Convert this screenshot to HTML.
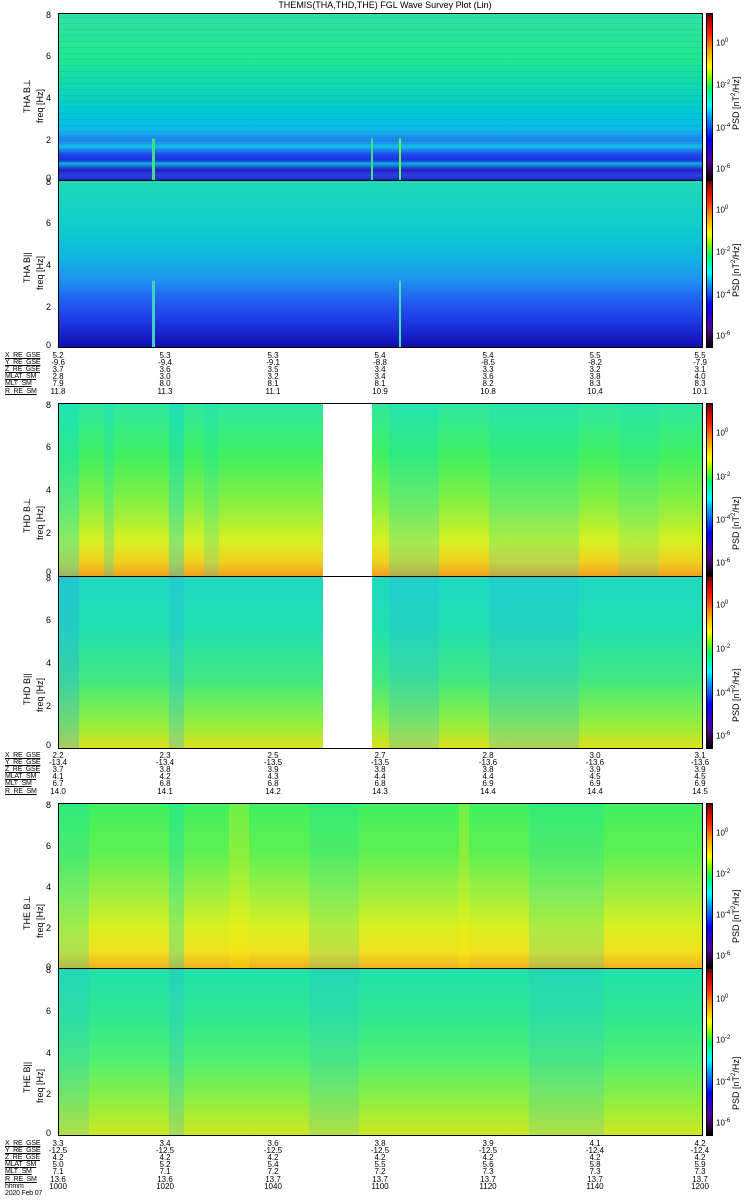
<!DOCTYPE html>
<html><head><meta charset="utf-8"><style>
*{margin:0;padding:0;box-sizing:border-box}
body{width:750px;height:1200px;background:#fff;position:relative;overflow:hidden;font-family:"Liberation Sans",sans-serif;color:#000}
.p{position:absolute;left:58px;width:645px;border:1.5px solid #000}
.s{position:absolute;inset:0}
.cb{position:absolute;left:706px;width:7px;border:1px solid #000;background:linear-gradient(to top,#000 0%,#300040 5%,#5000a0 12%,#0000ff 25%,#00a0ff 38%,#00ffff 45%,#00ff60 55%,#80ff00 62%,#ffff00 68%,#ffa000 78%,#ff2000 88%,#c00000 96%,#600000 100%)}
.ct{position:absolute;left:716px;font-size:8px}
.ct sup{font-size:6px}
.ax{position:absolute;font-size:9px;transform:rotate(-90deg);transform-origin:left top;white-space:nowrap}
.yl{position:absolute;left:46px;font-size:9px}
.r{position:absolute;left:0;width:750px;height:7px;font-size:8px;line-height:7px;white-space:nowrap}
.r span{position:absolute;transform:translateX(-50%)}
.r b{position:absolute;left:5px;font-weight:normal;text-decoration:underline;font-size:7px;letter-spacing:-0.2px}
.a{left:58px}.b{left:165px}.c{left:273px}.d{left:380px}.e{left:488px}.f{left:595px}.g{left:700px}
</style></head><body>
<div style="position:absolute;top:0;left:0;width:750px;text-align:center;font-size:9px;line-height:11px;padding-left:20px">THEMIS(THA,THD,THE) FGL Wave Survey Plot (Lin)</div>

<!-- Panel 1 THA Bperp -->
<div class="p" style="top:13px;height:168px;background:linear-gradient(to bottom,#30e0a0 0%,#20e890 25%,#10d8b0 45%,#00c8d8 60%,#10b8e8 70%,#2080f0 76%,#10c0e0 80%,#2050f0 84%,#1a30e0 88%,#10b0e0 90%,#2020c8 94%,#3040e0 97%,#1828c0 100%)">
<div class="s" style="background:repeating-linear-gradient(to bottom,transparent 0 3px,rgba(0,0,150,.06) 3px 4px,transparent 4px 6px)"></div>
<div class="s" style="background:linear-gradient(to right,transparent 93px,#40e080 93px 96px,transparent 96px 312px,#40e080 312px 314px,transparent 314px 340px,#60f060 340px 342px,transparent 342px);clip-path:inset(75% 0 0 0)"></div>
</div>
<div class="cb" style="top:13px;height:168px"></div>
<div class="ct" style="top:38px">10<sup>0</sup></div><div class="ct" style="top:80px">10<sup>-2</sup></div><div class="ct" style="top:123px">10<sup>-4</sup></div><div class="ct" style="top:164px">10<sup>-6</sup></div>
<div class="ax" style="left:731px;top:130px">PSD [nT<sup style="font-size:6px">2</sup>/Hz]</div>
<div class="ax" style="left:22px;top:113px">THA B⊥</div><div class="ax" style="left:35px;top:123px">freq [Hz]</div>
<div class="yl" style="top:10px">8</div><div class="yl" style="top:51px">6</div><div class="yl" style="top:93px">4</div><div class="yl" style="top:135px">2</div><div class="yl" style="top:173px">0</div>

<!-- Panel 2 THA Bpar -->
<div class="p" style="top:180px;height:168px;background:linear-gradient(to bottom,#20d8b8 0%,#10d0c8 25%,#10b8e0 45%,#2090f0 60%,#2060f0 72%,#2040e8 82%,#1828d0 90%,#1010b0 100%)">
<div class="s" style="background:linear-gradient(to right,transparent 93px,#40d0c0 93px 96px,transparent 96px 340px,#40e0b0 340px 342px,transparent 342px);clip-path:inset(60% 0 0 0)"></div>
</div>
<div class="cb" style="top:180px;height:168px"></div>
<div class="ct" style="top:205px">10<sup>0</sup></div><div class="ct" style="top:247px">10<sup>-2</sup></div><div class="ct" style="top:290px">10<sup>-4</sup></div><div class="ct" style="top:331px">10<sup>-6</sup></div>
<div class="ax" style="left:731px;top:297px">PSD [nT<sup style="font-size:6px">2</sup>/Hz]</div>
<div class="ax" style="left:22px;top:283px">THA B||</div><div class="ax" style="left:35px;top:290px">freq [Hz]</div>
<div class="yl" style="top:177px">8</div><div class="yl" style="top:218px">6</div><div class="yl" style="top:260px">4</div><div class="yl" style="top:302px">2</div><div class="yl" style="top:340px">0</div>

<div class="r" style="top:352px"><b>X_RE_GSE</b><span class="a">5.2</span><span class="b">5.3</span><span class="c">5.3</span><span class="d">5.4</span><span class="e">5.4</span><span class="f">5.5</span><span class="g">5.5</span></div>
<div class="r" style="top:359px"><b>Y_RE_GSE</b><span class="a">-9.6</span><span class="b">-9.4</span><span class="c">-9.1</span><span class="d">-8.8</span><span class="e">-8.5</span><span class="f">-8.2</span><span class="g">-7.9</span></div>
<div class="r" style="top:366px"><b>Z_RE_GSE</b><span class="a">3.7</span><span class="b">3.6</span><span class="c">3.5</span><span class="d">3.4</span><span class="e">3.3</span><span class="f">3.2</span><span class="g">3.1</span></div>
<div class="r" style="top:373px"><b>MLAT_SM</b><span class="a">2.8</span><span class="b">3.0</span><span class="c">3.2</span><span class="d">3.4</span><span class="e">3.6</span><span class="f">3.8</span><span class="g">4.0</span></div>
<div class="r" style="top:380px"><b>MLT_SM</b><span class="a">7.9</span><span class="b">8.0</span><span class="c">8.1</span><span class="d">8.1</span><span class="e">8.2</span><span class="f">8.3</span><span class="g">8.3</span></div>
<div class="r" style="top:388px"><b>R_RE_SM</b><span class="a">11.8</span><span class="b">11.3</span><span class="c">11.1</span><span class="d">10.9</span><span class="e">10.8</span><span class="f">10.4</span><span class="g">10.1</span></div>

<!-- Panel 3 THD Bperp -->
<div class="p" style="top:403px;height:174px;background:linear-gradient(to bottom,#30e8a0 0%,#40f060 30%,#90f040 60%,#d8f020 80%,#f0d020 92%,#f0a020 100%)">
<div class="s" style="background:linear-gradient(to right,rgba(0,220,220,.35) 0 20px,transparent 20px 45px,rgba(0,220,220,.25) 45px 55px,transparent 55px 110px,rgba(0,210,230,.35) 110px 125px,transparent 125px 145px,rgba(0,220,220,.2) 145px 160px,transparent 160px 330px,rgba(0,220,220,.25) 330px 380px,transparent 380px 430px,rgba(0,220,220,.2) 430px 520px,transparent 520px 560px,rgba(0,220,220,.15) 560px 600px,transparent 600px)"></div>
<div class="s" style="left:264px;width:49px;background:#fff"></div>
</div>
<div class="cb" style="top:403px;height:174px"></div>
<div class="ct" style="top:428px">10<sup>0</sup></div><div class="ct" style="top:472px">10<sup>-2</sup></div><div class="ct" style="top:515px">10<sup>-4</sup></div><div class="ct" style="top:558px">10<sup>-6</sup></div>
<div class="ax" style="left:731px;top:550px">PSD [nT<sup style="font-size:6px">2</sup>/Hz]</div>
<div class="ax" style="left:22px;top:533px">THD B⊥</div><div class="ax" style="left:35px;top:540px">freq [Hz]</div>
<div class="yl" style="top:400px">8</div><div class="yl" style="top:442px">6</div><div class="yl" style="top:485px">4</div><div class="yl" style="top:528px">2</div><div class="yl" style="top:567px">0</div>

<!-- Panel 4 THD Bpar -->
<div class="p" style="top:576px;height:173px;background:linear-gradient(to bottom,#20d8c0 0%,#20e0b0 30%,#40e880 60%,#90f040 85%,#e0e020 100%)">
<div class="s" style="background:linear-gradient(to right,rgba(40,160,240,.3) 0 20px,transparent 20px 110px,rgba(40,180,240,.3) 110px 125px,transparent 125px 330px,rgba(40,180,240,.25) 330px 380px,transparent 380px 430px,rgba(40,180,240,.25) 430px 520px,transparent 520px)"></div>
<div class="s" style="left:264px;width:49px;background:#fff"></div>
</div>
<div class="cb" style="top:576px;height:173px"></div>
<div class="ct" style="top:600px">10<sup>0</sup></div><div class="ct" style="top:644px">10<sup>-2</sup></div><div class="ct" style="top:688px">10<sup>-4</sup></div><div class="ct" style="top:731px">10<sup>-6</sup></div>
<div class="ax" style="left:731px;top:722px">PSD [nT<sup style="font-size:6px">2</sup>/Hz]</div>
<div class="ax" style="left:22px;top:705px">THD B||</div><div class="ax" style="left:35px;top:712px">freq [Hz]</div>
<div class="yl" style="top:573px">8</div><div class="yl" style="top:615px">6</div><div class="yl" style="top:658px">4</div><div class="yl" style="top:701px">2</div><div class="yl" style="top:740px">0</div>

<div class="r" style="top:752px"><b>X_RE_GSE</b><span class="a">2.2</span><span class="b">2.3</span><span class="c">2.5</span><span class="d">2.7</span><span class="e">2.8</span><span class="f">3.0</span><span class="g">3.1</span></div>
<div class="r" style="top:759px"><b>Y_RE_GSE</b><span class="a">-13.4</span><span class="b">-13.4</span><span class="c">-13.5</span><span class="d">-13.5</span><span class="e">-13.6</span><span class="f">-13.6</span><span class="g">-13.6</span></div>
<div class="r" style="top:766px"><b>Z_RE_GSE</b><span class="a">3.7</span><span class="b">3.8</span><span class="c">3.9</span><span class="d">3.8</span><span class="e">3.8</span><span class="f">3.9</span><span class="g">3.9</span></div>
<div class="r" style="top:773px"><b>MLAT_SM</b><span class="a">4.1</span><span class="b">4.2</span><span class="c">4.3</span><span class="d">4.4</span><span class="e">4.4</span><span class="f">4.5</span><span class="g">4.5</span></div>
<div class="r" style="top:780px"><b>MLT_SM</b><span class="a">6.7</span><span class="b">6.8</span><span class="c">6.8</span><span class="d">6.8</span><span class="e">6.9</span><span class="f">6.9</span><span class="g">6.9</span></div>
<div class="r" style="top:788px"><b>R_RE_SM</b><span class="a">14.0</span><span class="b">14.1</span><span class="c">14.2</span><span class="d">14.3</span><span class="e">14.4</span><span class="f">14.4</span><span class="g">14.5</span></div>

<!-- Panel 5 THE Bperp -->
<div class="p" style="top:803px;height:166px;background:linear-gradient(to bottom,#40f060 0%,#60f050 30%,#a0f040 55%,#d8f020 75%,#f0e020 90%,#f0b020 100%)">
<div class="s" style="background:linear-gradient(to right,rgba(0,220,200,.25) 0 30px,transparent 30px 110px,rgba(0,220,200,.3) 110px 125px,transparent 125px 170px,rgba(255,240,0,.25) 170px 190px,transparent 190px 250px,rgba(0,220,200,.18) 250px 300px,transparent 300px 400px,rgba(255,240,0,.25) 400px 410px,transparent 410px 470px,rgba(0,220,200,.2) 470px 545px,transparent 545px)"></div>
</div>
<div class="cb" style="top:803px;height:166px"></div>
<div class="ct" style="top:828px">10<sup>0</sup></div><div class="ct" style="top:869px">10<sup>-2</sup></div><div class="ct" style="top:910px">10<sup>-4</sup></div><div class="ct" style="top:951px">10<sup>-6</sup></div>
<div class="ax" style="left:731px;top:943px">PSD [nT<sup style="font-size:6px">2</sup>/Hz]</div>
<div class="ax" style="left:22px;top:930px">THE B⊥</div><div class="ax" style="left:35px;top:938px">freq [Hz]</div>
<div class="yl" style="top:800px">8</div><div class="yl" style="top:841px">6</div><div class="yl" style="top:882px">4</div><div class="yl" style="top:923px">2</div><div class="yl" style="top:962px">0</div>

<!-- Panel 6 THE Bpar -->
<div class="p" style="top:968px;height:168px;background:linear-gradient(to bottom,#20e0a8 0%,#30e890 30%,#50f070 55%,#90f040 80%,#d0e820 100%)">
<div class="s" style="background:linear-gradient(to right,rgba(40,180,240,.2) 0 30px,transparent 30px 110px,rgba(40,180,240,.25) 110px 125px,transparent 125px 250px,rgba(40,180,240,.18) 250px 300px,transparent 300px 470px,rgba(40,180,240,.18) 470px 545px,transparent 545px)"></div>
</div>
<div class="cb" style="top:968px;height:168px"></div>
<div class="ct" style="top:994px">10<sup>0</sup></div><div class="ct" style="top:1035px">10<sup>-2</sup></div><div class="ct" style="top:1077px">10<sup>-4</sup></div><div class="ct" style="top:1118px">10<sup>-6</sup></div>
<div class="ax" style="left:731px;top:1110px">PSD [nT<sup style="font-size:6px">2</sup>/Hz]</div>
<div class="ax" style="left:22px;top:1093px">THE B||</div><div class="ax" style="left:35px;top:1103px">freq [Hz]</div>
<div class="yl" style="top:965px">8</div><div class="yl" style="top:1006px">6</div><div class="yl" style="top:1048px">4</div><div class="yl" style="top:1089px">2</div><div class="yl" style="top:1128px">0</div>

<div class="r" style="top:1140px"><b>X_RE_GSE</b><span class="a">3.3</span><span class="b">3.4</span><span class="c">3.6</span><span class="d">3.8</span><span class="e">3.9</span><span class="f">4.1</span><span class="g">4.2</span></div>
<div class="r" style="top:1147px"><b>Y_RE_GSE</b><span class="a">-12.5</span><span class="b">-12.5</span><span class="c">-12.5</span><span class="d">-12.5</span><span class="e">-12.5</span><span class="f">-12.4</span><span class="g">-12.4</span></div>
<div class="r" style="top:1154px"><b>Z_RE_GSE</b><span class="a">4.2</span><span class="b">4.2</span><span class="c">4.2</span><span class="d">4.2</span><span class="e">4.2</span><span class="f">4.2</span><span class="g">4.2</span></div>
<div class="r" style="top:1161px"><b>MLAT_SM</b><span class="a">5.0</span><span class="b">5.2</span><span class="c">5.4</span><span class="d">5.5</span><span class="e">5.6</span><span class="f">5.8</span><span class="g">5.9</span></div>
<div class="r" style="top:1168px"><b>MLT_SM</b><span class="a">7.1</span><span class="b">7.1</span><span class="c">7.2</span><span class="d">7.2</span><span class="e">7.3</span><span class="f">7.3</span><span class="g">7.3</span></div>
<div class="r" style="top:1176px"><b>R_RE_SM</b><span class="a">13.6</span><span class="b">13.6</span><span class="c">13.7</span><span class="d">13.7</span><span class="e">13.7</span><span class="f">13.7</span><span class="g">13.7</span></div>
<div class="r" style="top:1183px"><b style="text-decoration:none">hhmm</b><span class="a">1000</span><span class="b">1020</span><span class="c">1040</span><span class="d">1100</span><span class="e">1120</span><span class="f">1140</span><span class="g">1200</span></div>
<div class="r" style="top:1190px"><b style="text-decoration:none">2020 Feb 07</b></div>
</body></html>
